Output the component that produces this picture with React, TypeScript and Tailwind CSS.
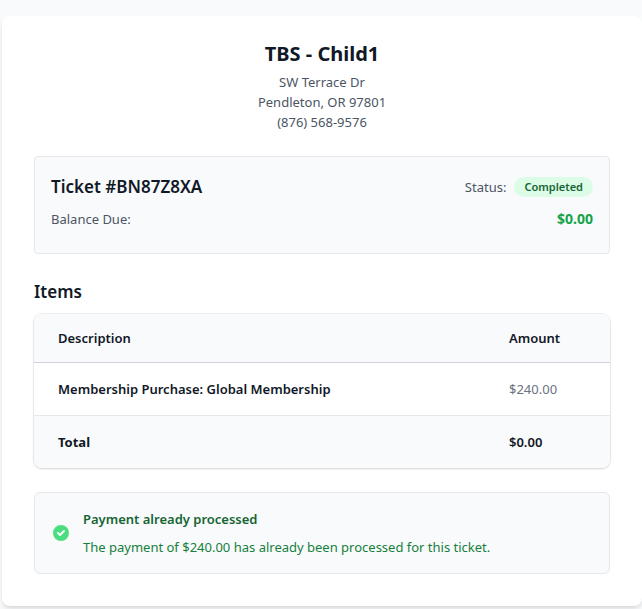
type Item = {
  id: number;
  description: string;
  amount: string;
};

const BUSINESS = {
  name: "TBS - Child1",
  street: "SW Terrace Dr",
  city: "Pendleton, OR 97801",
  phone: "(876) 568-9576",
};

const TICKET = {
  number: "BN87Z8XA",
  status: "Completed",
  balanceDue: "$0.00",
  paid: "$240.00",
  total: "$0.00",
};

const ITEMS: Item[] = [
  { id: 1, description: "Membership Purchase: Global Membership", amount: "$240.00" },
];

function CheckCircleIcon() {
  return (
    <svg className="h-5 w-5 shrink-0 text-[#4ade80]" viewBox="0 0 20 20" fill="currentColor" aria-hidden="true">
      <path
        fillRule="evenodd"
        clipRule="evenodd"
        d="M10 18a8 8 0 100-16 8 8 0 000 16zm3.707-9.293a1 1 0 00-1.414-1.414L9 10.586 7.707 9.293a1 1 0 00-1.414 1.414l2 2a1 1 0 001.414 0l4-4z"
      />
    </svg>
  );
}

export default function App() {
  return (
    <main className="min-h-screen bg-[#f9fafb] pt-4 pl-0.5 font-['Noto_Sans',sans-serif] text-[13px] leading-5 text-[#111827]">
      <div className="mx-auto max-w-2xl rounded-lg bg-white px-8 pt-6 pb-8 shadow-md">
        {/* HEADER */}
        <header className="mb-6 text-center">
          <h1 className="mb-1 text-xl font-bold">{BUSINESS.name}</h1>
          <div className="text-[#4b5563]">
            <p>{BUSINESS.street}</p>
            <p>{BUSINESS.city}</p>
            <p>{BUSINESS.phone}</p>
          </div>
        </header>

        {/* TICKET SUMMARY */}
        <section className="mb-6 rounded border border-[#e5e7eb] bg-[#f9fafb] p-4">
          <div className="mb-2 flex items-center justify-between">
            <h2 className="text-[17px] leading-7 font-semibold">Ticket #{TICKET.number}</h2>
            <div className="flex items-center gap-2">
              <span className="text-[#4b5563]">Status:</span>
              <span className="rounded-full bg-[#dcfce7] px-2.5 py-0.5 text-[11px] leading-4 font-semibold text-[#166534]">{TICKET.status}</span>
            </div>
          </div>
          <div className="mb-2 flex items-center justify-between">
            <span className="text-[#4b5563]">Balance Due:</span>
            <span className="text-sm font-bold text-[#16a34a]">{TICKET.balanceDue}</span>
          </div>
        </section>

        {/* ITEMS */}
        <section className="mb-6">
          <h2 className="mb-2 text-[17px] leading-7 font-semibold">Items</h2>
          <div className="overflow-hidden rounded-lg shadow-sm ring-1 ring-black/5">
            <table className="w-full text-left">
              <thead className="border-b border-[#d1d5db] bg-[#f9fafb]">
                <tr>
                  <th scope="col" className="px-6 py-3.5 font-semibold">Description</th>
                  <th scope="col" className="w-[125px] px-6 py-3.5 font-semibold">Amount</th>
                </tr>
              </thead>
              <tbody>
                {ITEMS.map((item) => (
                  <tr key={item.id} className="border-b border-[#e5e7eb]">
                    <td className="px-6 py-4 font-semibold">{item.description}</td>
                    <td className="px-6 py-4 text-[#6b7280]">{item.amount}</td>
                  </tr>
                ))}
                <tr className="bg-[#f9fafb]">
                  <td className="px-6 py-4 font-bold">Total</td>
                  <td className="px-6 py-4 font-semibold">{TICKET.total}</td>
                </tr>
              </tbody>
            </table>
          </div>
        </section>

        {/* PAYMENT NOTICE */}
        <div role="status" className="flex items-center gap-3 rounded-md border border-[#e5e7eb] bg-[#f9fafb] p-4">
          <CheckCircleIcon />
          <div>
            <h3 className="mb-2 font-semibold text-[#166534]">Payment already processed</h3>
            <p className="text-[#15803d]">The payment of {TICKET.paid} has already been processed for this ticket.</p>
          </div>
        </div>
      </div>
    </main>
  );
}
